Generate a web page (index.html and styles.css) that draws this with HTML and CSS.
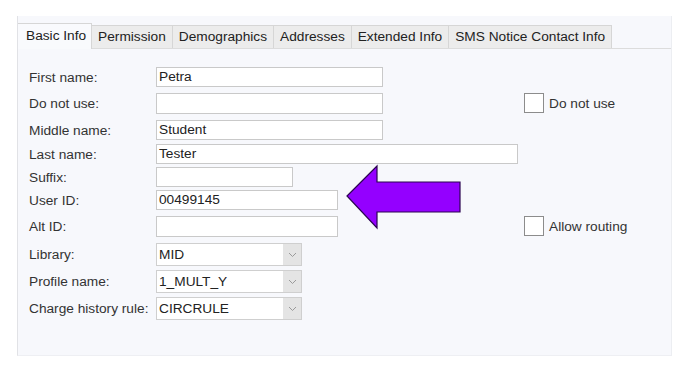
FILE: index.html
```html
<!DOCTYPE html>
<html>
<head>
<meta charset="utf-8">
<link rel="stylesheet" href="styles.css">
</head>
<body>
<div class="panel">
  <div class="tabs">
    <div class="tab active">Basic Info</div>
    <div class="tab">Permission</div>
    <div class="tab">Demographics</div>
    <div class="tab">Addresses</div>
    <div class="tab">Extended Info</div>
    <div class="tab">SMS Notice Contact Info</div>
  </div>
  <div class="form">
    <div class="lbl">First name:</div>
    <div class="inp w-name">Petra</div>
    <div></div>

    <div class="lbl">Do not use:</div>
    <div class="inp w-name tall"></div>
    <div class="chk"><span class="box"></span><span>Do not use</span></div>

    <div class="lbl">Middle name:</div>
    <div class="inp w-name">Student</div>
    <div></div>

    <div class="lbl">Last name:</div>
    <div class="inp w-long">Tester</div>
    <div></div>

    <div class="lbl">Suffix:</div>
    <div class="inp w-short"></div>
    <div></div>

    <div class="lbl">User ID:</div>
    <div class="inp w-id">00499145</div>
    <div></div>

    <div class="lbl">Alt ID:</div>
    <div class="inp w-id tall"></div>
    <div class="chk"><span class="box"></span><span>Allow routing</span></div>

    <div class="lbl sel-lbl">Library:</div>
    <div class="sel"><span class="val">MID</span><span class="btn"><svg width="9" height="6" viewBox="0 0 9 6"><path d="M1 1 L4.5 4.5 L8 1" fill="none" stroke="#9a9a9a" stroke-width="1"/></svg></span></div>
    <div></div>

    <div class="lbl sel-lbl">Profile name:</div>
    <div class="sel"><span class="val">1_MULT_Y</span><span class="btn"><svg width="9" height="6" viewBox="0 0 9 6"><path d="M1 1 L4.5 4.5 L8 1" fill="none" stroke="#9a9a9a" stroke-width="1"/></svg></span></div>
    <div></div>

    <div class="lbl sel-lbl">Charge history rule:</div>
    <div class="sel"><span class="val">CIRCRULE</span><span class="btn"><svg width="9" height="6" viewBox="0 0 9 6"><path d="M1 1 L4.5 4.5 L8 1" fill="none" stroke="#9a9a9a" stroke-width="1"/></svg></span></div>
    <div></div>
  </div>
</div>
<svg class="arrow" width="118" height="66" viewBox="0 0 118 66">
  <polygon points="2,32 32,2 32,18 115,18 115,48 32,48 32,64" fill="#9400ff" stroke="#2b0550" stroke-width="1.2" stroke-linejoin="miter"/>
</svg>
</body>
</html>
```
FILE: styles.css
```css
html, body {
  margin: 0;
  padding: 0;
  background: #ffffff;
}
body {
  font-family: "Liberation Sans", Arial, sans-serif;
  font-size: 13.7px;
  color: #333333;
  width: 684px;
  height: 382px;
  overflow: hidden;
}
.panel {
  margin: 16px 0 0 17px;
  width: 655px;
  height: 340px;
  box-sizing: border-box;
  background: #f7f8fc;
  border-left: 1px solid #e1e2e6;
  border-right: 1px solid #eceef2;
  border-bottom: 1px solid #eeeff3;
  padding-top: 7px;
}
.tabs {
  display: flex;
  align-items: flex-end;
  height: 25px;
  border-bottom: 1px solid #dcdcdc;
}
.tab {
  height: 23px;
  line-height: 22px;
  padding: 0 6px;
  background: #ececec;
  border: 1px solid #d6d6d6;
  border-bottom: none;
  border-left: none;
  box-sizing: border-box;
  color: #222222;
  white-space: nowrap;
}
.tab.active {
  height: 26px;
  line-height: 24px;
  margin-bottom: -1px;
  padding: 0 5px 0 8px;
  background: #f9fafd;
  border-top: 1px solid #d6d6d6;
  border-left: none;
  color: #222222;
}
.form {
  display: grid;
  grid-template-columns: 127px 368px auto;
  grid-template-rows: 26px 27px 24px 23px 23px 26px 27px 27px 27px 23px;
  align-items: start;
  padding: 18px 0 0 11px;
}
.lbl {
  line-height: 21px;
  color: #333333;
  white-space: nowrap;
}
.sel-lbl {
  line-height: 23px;
}
.inp {
  height: 20px;
  box-sizing: border-box;
  border: 1px solid #c9c9c9;
  background: #ffffff;
  padding: 0 2px;
  line-height: 18px;
  color: #222222;
}
.inp.tall {
  height: 21px;
}
.w-name { width: 227px; }
.w-long { width: 362px; }
.w-short { width: 137px; }
.w-id { width: 182px; }
.sel {
  display: flex;
  width: 146px;
  height: 23px;
  box-sizing: border-box;
  border: 1px solid #cfcfcf;
  background: #ffffff;
  color: #222222;
}
.sel .val {
  flex: 1;
  line-height: 21px;
  padding-left: 2px;
}
.sel .btn {
  width: 18px;
  background: #e4e4e4;
  display: flex;
  align-items: center;
  justify-content: center;
}
.chk {
  display: flex;
  align-items: center;
  gap: 5px;
  color: #333333;
  white-space: nowrap;
}
.box {
  width: 20px;
  height: 20px;
  box-sizing: border-box;
  border: 1px solid #8c8c8c;
  background: #ffffff;
}
.arrow {
  position: absolute;
  left: 345px;
  top: 164px;
}
```
